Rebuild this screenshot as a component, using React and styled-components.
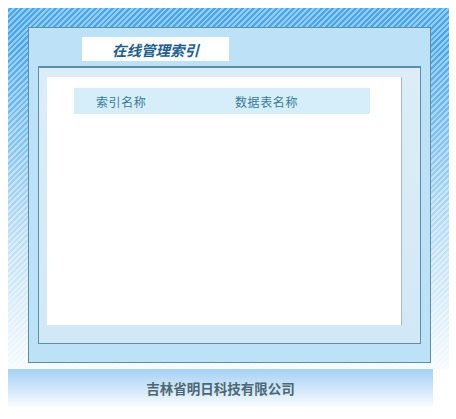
import React from "react";
import styled, { createGlobalStyle } from "styled-components";

const Global = createGlobalStyle`
  html, body { margin: 0; padding: 0; background: #ffffff; }
  body { padding: 8px; font-family: "Noto Sans CJK SC", "Liberation Sans", sans-serif; }
`;

const Striped = styled.div`
  width: 441px;
  height: 361px;
  box-sizing: border-box;
  padding: 19px 18px 6px 20px;
  background:
    linear-gradient(to bottom, rgba(255,255,255,0) 10%, rgba(255,255,255,0.55) 55%, rgba(255,255,255,0.95) 100%),
    repeating-linear-gradient(-45deg, #4aa6e6 0px, #4aa6e6 2px, #92ccf2 2px, #92ccf2 4px);
`;

const Panel = styled.div`
  box-sizing: border-box;
  height: 336px;
  border: 1px solid #5d8ea8;
  background: #bde1f6;
  padding: 9px 9px 18px 9px;
  display: flex;
  flex-direction: column;
`;

const TitleBox = styled.div`
  margin-left: 44px;
  width: 147px;
  height: 24px;
  background: #ffffff;
  display: flex;
  align-items: center;
  padding-left: 30px;
  box-sizing: border-box;
  font-style: italic;
  font-weight: bold;
  font-size: 14.5px;
  color: #1f5f8e;
`;

const Frame = styled.div`
  margin-top: 5px;
  flex: 1;
  border: 1px solid #5d8ea8;
  border-top: 2px solid #5d8ea8;
  background: linear-gradient(to bottom, #dcedf8, #d2e8f6);
  padding: 9px 18px 18px 8px;
  display: flex;
  flex-direction: column;
`;

const Sheet = styled.div`
  flex: 1;
  background: #ffffff;
  border-right: 1px solid #aab6c0;
  padding: 11px 0 0 27px;
`;

const HeaderRow = styled.div`
  width: 296px;
  height: 26px;
  background: #d6eef9;
  display: flex;
  align-items: center;
  font-size: 12px;
  letter-spacing: 0.6px;
  color: #3a7a9c;
`;

const Cell = styled.div`
  width: ${(p) => p.$w}px;
  padding-left: ${(p) => p.$pad}px;
  box-sizing: border-box;
`;

const Footer = styled.div`
  width: 425px;
  height: 50px;
  background: linear-gradient(to bottom, #a6d0f5 0%, #d6eafb 45%, #ffffff 80%);
  display: flex;
  justify-content: center;
  padding-top: 9px;
  box-sizing: border-box;
  font-weight: bold;
  font-size: 13.5px;
  color: #4d6874;
`;

export default function App() {
  return (
    <>
      <Global />
      <Striped>
        <Panel>
          <TitleBox>在线管理索引</TitleBox>
          <Frame>
            <Sheet>
              <HeaderRow>
                <Cell $w={161} $pad={22}>索引名称</Cell>
                <Cell $w={135} $pad={0}>数据表名称</Cell>
              </HeaderRow>
            </Sheet>
          </Frame>
        </Panel>
      </Striped>
      <Footer>吉林省明日科技有限公司</Footer>
    </>
  );
}
